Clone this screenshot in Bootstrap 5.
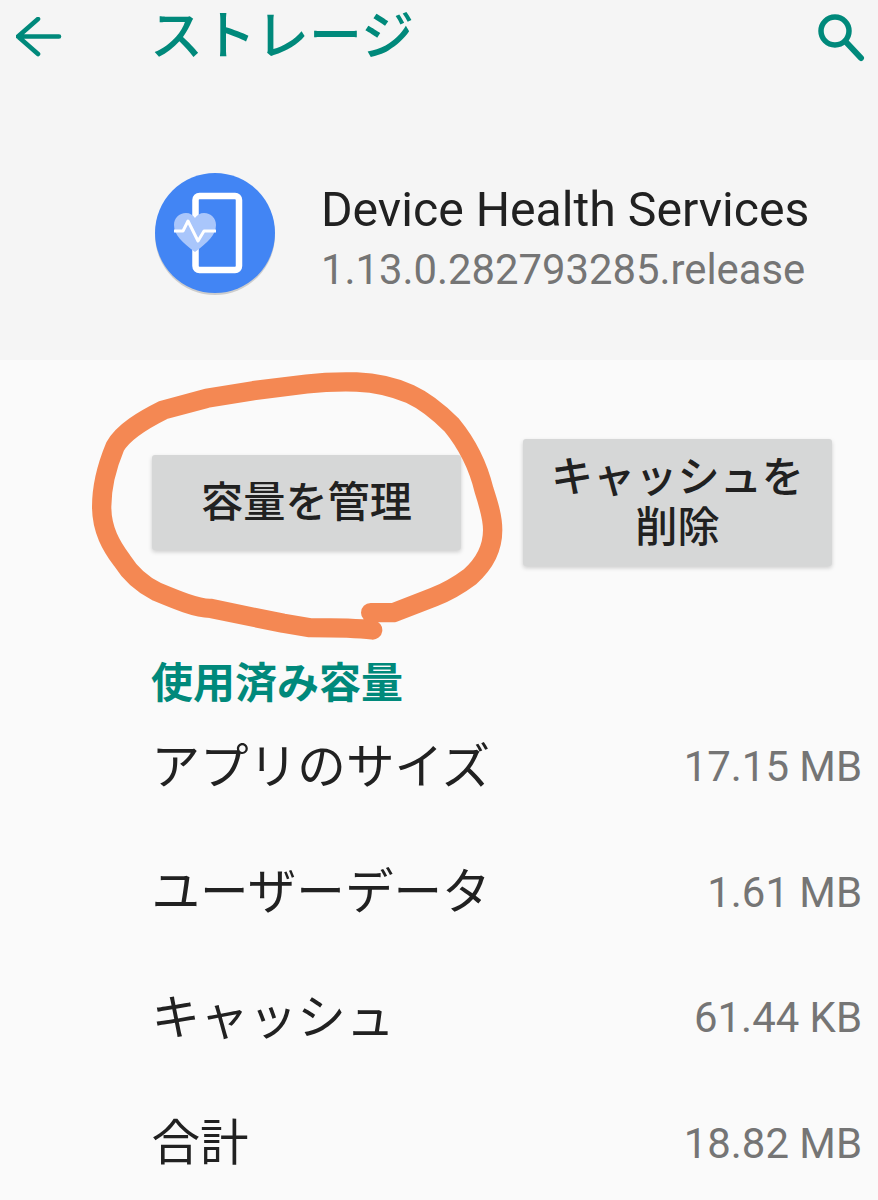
<!DOCTYPE html>
<html lang="ja">
<head>
<meta charset="utf-8">
<title>ストレージ</title>
<link href="https://cdn.jsdelivr.net/npm/bootstrap@5.3.0/dist/css/bootstrap.min.css" rel="stylesheet">
<style>
html,body{height:1200px;overflow:hidden}
body{background:#fafafa;font-family:Roboto,"Noto Sans CJK JP",sans-serif;color:#212121;position:relative}
.top-area{background:#f5f5f5;height:360px}
.app-bar{height:74px;padding:0 13px 0 16px}
.app-title{color:#00897b;font-size:53px;line-height:76px;font-weight:500;margin:0 0 0 88px;letter-spacing:0}
.app-info{padding:99px 0 0 155px;gap:46px}
.app-text{padding-top:6px}
.app-name{font-size:48.2px;line-height:62px;color:#212121}
.app-ver{font-size:41.8px;line-height:58px;color:#757575}
.action-row{padding-left:152px;padding-right:46px;height:237px;gap:62px;padding-top:48px}
.act-btn{width:309px;background:#d6d7d7;border:0;border-radius:3px;font-size:42.2px;font-weight:500;line-height:50px;color:#212121;box-shadow:0 2px 4px rgba(0,0,0,.18);padding:8px 20px}
.act-btn.one{height:95px}
.act-btn.two{height:127px}
.sec-label{color:#00897b;font-size:42px;font-weight:700;line-height:47px;margin:63px 0 0 151px}
.info-row{height:125.5px;padding:0 16px 0 151.500px}
.row-list{margin-top:-2px}
.info-name{font-size:48.6px;line-height:64px;color:#212121}
.info-val{font-size:41.9px;color:#757575}
.scribble{position:absolute;left:80px;top:360px;pointer-events:none}
</style>
</head>
<body>
<div class="top-area">
  <div class="app-bar d-flex align-items-center">
    <svg width="46" height="40" viewBox="0 0 46 40" fill="none" stroke="#00897b" stroke-width="4.6" stroke-linecap="round" stroke-linejoin="round"><path d="M22 2 2 19.500 22 37M2 19.500H43"/></svg>
    <h1 class="app-title flex-grow-1">ストレージ</h1>
    <svg width="50" height="50" viewBox="0 0 50 50" fill="none" stroke="#00897b" stroke-linecap="round"><circle cx="20" cy="19" r="14" stroke-width="5.500"/><path d="M31 30 46 46" stroke-width="6"/></svg>
  </div>
  <div class="app-info d-flex align-items-start">
    <svg width="120" height="124" viewBox="0 0 120 124" class="flex-shrink-0">
      <circle cx="60" cy="62" r="60" fill="#000" opacity=".16"/>
      <circle cx="60" cy="60" r="60" fill="#4285f4"/>
      <rect x="40.500" y="23" width="43.500" height="74" rx="4" fill="none" stroke="#fff" stroke-width="6.500"/>
      <path d="M40 79C27 69 19 62 19 52 19 45 24 40 31 40 35 40 38 42 40 45 42 42 45 40 49 40 56 40 61 45 61 52 61 62 53 69 40 79Z" fill="#a9c6fb"/>
      <path d="M19 58H28L33 48 43 68 49 58H61" fill="none" stroke="#fff" stroke-width="3" stroke-linejoin="round"/>
    </svg>
    <div class="app-text">
      <div class="app-name">Device Health Services</div>
      <div class="app-ver">1.13.0.282793285.release</div>
    </div>
  </div>
</div>
<div class="action-row d-flex align-items-center">
  <button type="button" class="btn act-btn one">容量を管理</button>
  <button type="button" class="btn act-btn two">キャッシュを削除</button>
</div>
<div class="sec-label">使用済み容量</div>
<div class="row-list">
<div class="info-row d-flex justify-content-between align-items-center"><span class="info-name">アプリのサイズ</span><span class="info-val">17.15 MB</span></div>
<div class="info-row d-flex justify-content-between align-items-center"><span class="info-name">ユーザーデータ</span><span class="info-val">1.61 MB</span></div>
<div class="info-row d-flex justify-content-between align-items-center"><span class="info-name">キャッシュ</span><span class="info-val">61.44 KB</span></div>
<div class="info-row d-flex justify-content-between align-items-center"><span class="info-name">合計</span><span class="info-val">18.82 MB</span></div>
</div>
<svg class="scribble" width="440" height="290" viewBox="0 0 1320 870" fill="none" stroke="#f48853" stroke-width="58" stroke-linecap="round" stroke-linejoin="round"><path d="M878 810C820 803 760 803 690 803L610 790 390 745C350 745 290 720 230 695 190 675 150 640 125 600 95 560 65 510 65 440 65 380 80 320 105 260 130 215 190 180 250 150L380 115 520 92 680 72C740 65 790 65 830 66 880 68 940 80 990 102 1040 125 1080 160 1115 195 1160 250 1195 320 1212 390 1225 430 1238 470 1238 510 1238 560 1215 610 1170 650 1130 680 1090 700 1060 712L940 758H872"/></svg>
</body>
</html>
